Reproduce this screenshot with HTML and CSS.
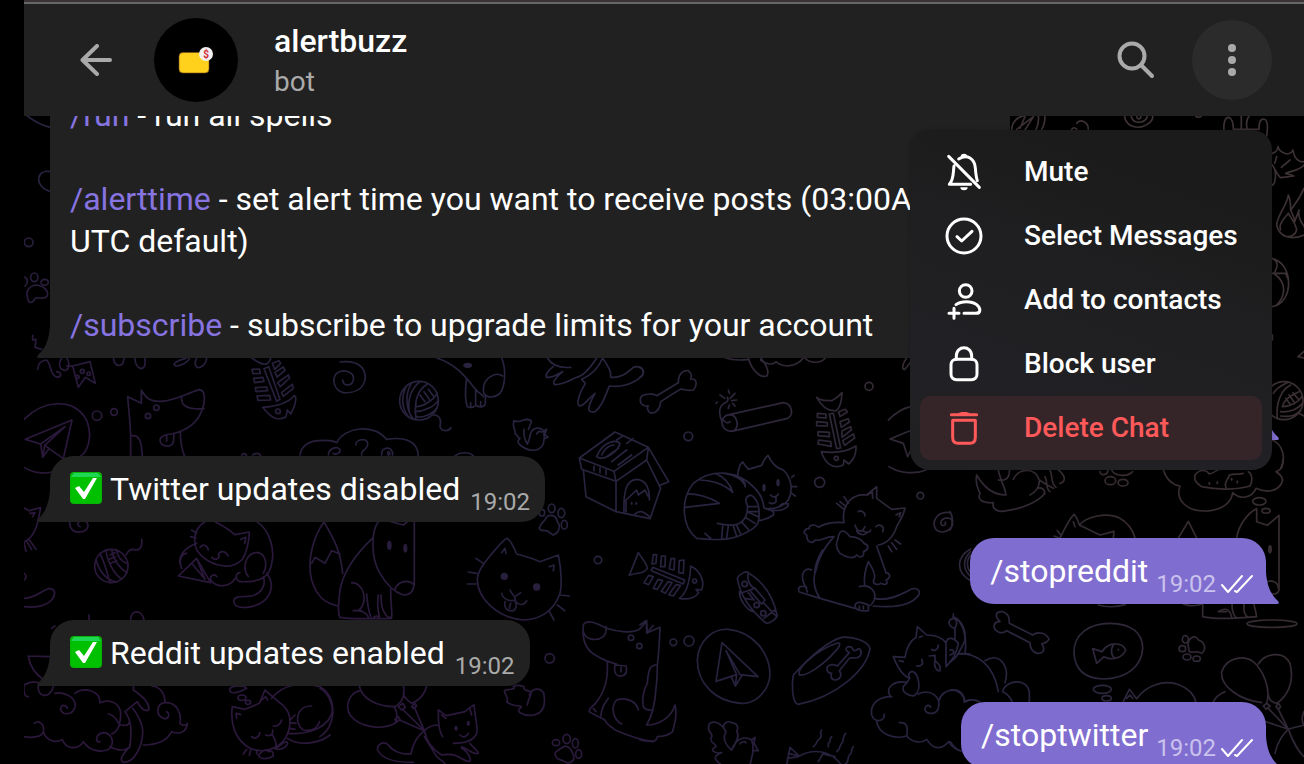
FILE: index.html
```html
<!DOCTYPE html>
<html lang="en">
<head>
    <meta charset="UTF-8">
    <meta name="viewport" content="width=device-width, initial-scale=1.0">
    <title>alertbuzz</title>
    <link rel="stylesheet" href="styles.css">
</head>
<body>
    <div class="app">
        <header class="header">
            <button class="icon-button" type="button" aria-label="Back">
                <svg class="icon-back" viewBox="0 0 32 32"><path d="M30 16H2.5M17 2L2.5 16 17 30"/></svg>
            </button>
            <svg class="avatar" viewBox="0 0 84 84" aria-hidden="true">
                <circle cx="42" cy="42" r="42" fill="#000"/>
                <rect x="25" y="34.5" width="30" height="20.5" rx="4" fill="#ffd01c" stroke="#7a4a20" stroke-width=".6"/>
                <circle cx="52" cy="36" r="7" fill="#f2f0f0"/>
                <text x="52" y="39.5" class="avatar-sign">$</text>
            </svg>
            <div class="peer">
                <h1>alertbuzz</h1>
                <p>bot</p>
            </div>
            <button class="icon-button" type="button" aria-label="Search">
                <svg class="icon-search" viewBox="0 0 40 40"><circle cx="16" cy="16" r="12.5"/><path d="M25 25L36 36"/></svg>
            </button>
            <button class="icon-button active" type="button" aria-label="More actions">
                <svg class="icon-more" viewBox="0 0 40 40"><circle cx="20" cy="8" r="4"/><circle cx="20" cy="20" r="4"/><circle cx="20" cy="32" r="4"/></svg>
            </button>
        </header>

        <main class="chat">
            <!-- Wallpaper -->
            <svg class="wallpaper" viewBox="72 348 3840 1944" preserveAspectRatio="xMinYMin slice" aria-hidden="true">
                <defs>
                    <linearGradient id="tint" x1="0" y1="1" x2="1" y2=".3">
                        <stop offset="0" stop-color="#2c173b"/>
                        <stop offset=".28" stop-color="#2a193c"/>
                        <stop offset=".42" stop-color="#28213d"/>
                        <stop offset=".58" stop-color="#2a2440"/>
                        <stop offset=".76" stop-color="#352b30"/>
                        <stop offset="1" stop-color="#3c3133"/>
                    </linearGradient>
                    <mask id="doodles" maskUnits="userSpaceOnUse" x="72" y="348" width="3840" height="1944">
                        <g class="lines">
                            <!-- left edge -->
                            <g transform="translate(0 330)">
                                <path d="M82 18C105 35 130 48 152 52M150 185C110 175 100 230 150 244"/>
                                <circle cx="86" cy="397" r="13"/>
                                <path d="M82 560C78 545 85 530 105 525 130 525 150 545 140 560 130 570 115 560 105 565 98 580 85 585 82 560M72 500C85 505 85 520 75 528M98 676V690L108 688 105 712 125 718"/>
                                <ellipse cx="103" cy="502" rx="11" ry="13"/>
                                <ellipse cx="134" cy="517" rx="11" ry="9"/>
                            </g>
                            <!-- plane, dog, fish bone -->
                            <g transform="translate(0 1020)">
                                <path d="M72 238C130 180 215 175 252 228 280 270 270 330 240 350M72 382C100 400 135 402 156 396"/>
                                <path d="M216 240L76 298 122 312 128 352 146 328M216 240L190 356 134 316 195 260 122 312M134 316L128 352"/>
                                <circle cx="291" cy="227" r="14"/>
                                <circle cx="342" cy="216" r="10"/>
                                <path d="M392 350V300C392 250 386 210 383 170L424 190V150C438 176 450 184 485 184C525 182 560 160 598 149C620 152 614 190 606 210C592 250 560 272 515 282C485 284 476 295 482 308C490 322 515 322 520 306L522 284M545 168C540 195 560 210 612 206M500 288V304M392 288C420 280 425 310 427 350M541 276C541 310 548 335 554 350"/>
                                <circle cx="444" cy="228" r="8"/>
                                <circle cx="469" cy="203" r="8"/>
                                <path d="M756 88l22-1 3 13-22 1zM761 115l28-3 3 12-28 4zM766 143l34-2 3 11-35 3zM771 168l38-2 3 14-38 1zM792 86l14-6 34 98-10 6zM817 70l20-8 5 8-18 18zM825 97l25-16 5 10-24 20zM833 128l32-23 4 9-28 26zM845 157l32-24 3 12-30 24zM788 202C815 200 860 195 882 167C890 165 890 190 872 222L862 210 858 230C830 246 810 230 788 202zM756 54C770 65 790 75 800 72C808 66 812 60 812 54"/>
                                <circle cx="834" cy="214" r="7"/>
                                <path d="M340 54C345 85 370 82 372 56M404 54C408 90 430 92 435 75V56M560 54C545 60 525 62 522 74 530 85 560 70 568 56M590 54C580 75 590 86 600 82 612 78 620 65 620 54"/>
                                <path d="M218 78L270 65 286 130 256 112 235 142zM113 88C115 70 125 60 140 60 155 75 150 110 175 112 185 108 185 98 170 95M185 54C170 80 185 95 200 90 212 80 205 60 200 54M200 78L218 78"/>
                                <circle cx="247" cy="94" r="6"/>
                                <circle cx="232" cy="111" r="5"/>
                                <circle cx="266" cy="101" r="5"/>
                                <path d="M72 504L88 512 122 503C115 540 110 580 82 600L72 606M90 520L105 518 98 530M88 600L108 628M80 604L95 628M72 608L78 634M210 540C205 570 225 578 240 576 270 574 270 545 250 542 232 542 228 556 240 560M725 345C730 338 738 340 740 347M758 345C765 338 778 338 782 347"/>
                            </g>
                            <!-- spiral, yarn, bird, dog house -->
                            <g transform="translate(960 1020)">
                                <path d="M60 66C110 60 137 80 136 115 130 150 100 160 70 158 40 150 35 115 50 100 70 85 105 95 100 120 95 140 70 140 68 120"/>
                                <circle cx="297" cy="182" r="58"/>
                                <path d="M258 140C240 180 250 210 265 230M275 128C250 170 262 215 280 238M322 132C300 145 280 175 288 238M300 125C275 145 262 175 268 215M288 200C310 200 340 180 352 160M285 215C310 215 345 200 355 180M290 230C310 235 340 220 350 205M300 165L315 185M312 155L328 178M325 148L340 168M340 225C360 225 365 240 360 260 365 275 385 275 393 263"/>
                                <path d="M350 54C400 70 430 100 460 140 480 165 490 165 490 170M545 54C560 90 555 140 540 160 515 180 490 170 490 150 490 110 530 95 548 108M440 115C435 150 435 180 442 200 455 205 465 200 467 195V148M467 195C480 205 495 200 496 190V168M452 188V200M482 185V198"/>
                                <ellipse class="dot" cx="443" cy="76" rx="13" ry="8"/>
                                <path d="M682 54C695 75 720 85 752 82M700 80C685 90 675 105 680 112 700 115 715 100 728 95M728 95C705 115 695 130 705 134 730 135 755 118 770 112 790 108 810 85 830 54M785 118C815 105 835 85 848 54 865 80 875 95 872 112 900 115 920 100 940 82 960 75 975 90 968 105 940 135 900 142 868 138 855 170 845 200 825 215 800 220 800 205 825 160M825 160C805 175 795 195 780 198 765 195 780 155 796 130L785 118"/>
                                <path d="M625 268C635 245 640 240 620 238 600 240 605 250 582 242 575 260 590 275 585 280 600 295 590 290 600 295 595 300 590 305 600 315 630 340 670 335 672 300 675 290 670 280 672 275 665 262 640 258 632 280 628 290 630 300 622 312M612 268C610 285 615 300 622 312M650 282C652 275 660 272 664 276M668 275L680 268 674 282 684 292 672 296"/>
                                <path d="M0 302C20 300 35 300 50 308 75 260 160 250 200 298 250 290 295 300 295 350M25 345C25 325 55 315 60 330 62 340 45 345 40 340M108 315C105 300 140 290 143 310 145 330 120 330 125 345M185 345C180 320 220 315 218 345M205 345C198 335 210 330 210 345M405 348C420 335 450 335 460 348M-60 345C-55 310 -20 300 0 302"/>
                                <path d="M885 276L778 354 882 394 985 322zM778 354L785 388 888 424 882 394M888 424L980 360 985 322M790 390L798 470 888 515V424M888 515L990 536M912 518C910 450 920 420 950 418 980 420 990 450 988 480M918 515V480L950 450 955 465 975 450 985 470M945 522C955 512 970 512 988 530M822 378V392M840 384V398M858 390V404M830 350C850 300 890 300 900 310 895 335 850 365 830 350M845 345C855 325 870 315 882 315M860 350L895 325M875 365L920 330M890 300L905 290M920 310L940 296M895 375L935 345M980 360L1022 445 990 536M985 322L1046 425 1022 435"/>
                                <ellipse class="dot" cx="935" cy="490" rx="3" ry="5"/>
                                <ellipse class="dot" cx="949" cy="490" rx="3" ry="5"/>
                                <path d="M660 560C665 545 675 545 680 530 695 520 710 530 712 545 725 560 715 580 700 585 690 580 685 570 675 572 660 572 655 568 660 560"/>
                                <ellipse cx="695" cy="505" rx="10" ry="13"/>
                                <ellipse cx="724" cy="519" rx="10" ry="14"/>
                                <ellipse cx="733" cy="554" rx="9" ry="13"/>
                                <ellipse cx="666" cy="518" rx="8" ry="10"/>
                            </g>
                            <!-- bone, dynamite, fish bone, cats -->
                            <g transform="translate(1920 1020)">
                                <path d="M50 167L115 128C115 100 130 90 145 92 155 100 155 110 152 117 175 115 170 140 160 150 140 155 130 145 120 148L62 185C60 210 45 222 30 218 20 210 22 200 25 198 0 200 -3 180 5 168 20 160 40 160 50 167M0 82C15 90 12 105 0 112M258 54C280 62 310 60 325 58M325 54C335 90 360 115 380 108 390 95 375 70 362 54M362 60C380 75 400 75 408 65 430 85 470 80 490 54M495 54C510 70 540 72 556 54"/>
                                <circle cx="145" cy="289" r="13"/>
                                <circle cx="687" cy="139" r="12"/>
                                <circle cx="539" cy="427" r="15"/>
                                <circle cx="841" cy="467" r="10"/>
                                <path d="M268 224L430 188C455 190 465 225 440 236L275 274M270 224C290 225 298 255 285 270 265 280 245 265 246 245 250 230 260 224 270 224M246 245C235 220 235 195 260 186 265 182 265 178 262 172M250 240C255 250 265 250 270 245M265 150L268 160M285 160L270 175M290 180L275 182M240 165L255 175M228 190L232 186M265 205L268 195M285 198L278 190"/>
                                <path d="M530 172C545 185 560 180 575 182 590 175 600 165 606 158 605 180 600 205 588 212 560 215 540 190 530 172zM532 220L558 222V234L532 232zM530 245L562 248V258L530 257zM534 275L568 277V290L534 287zM536 300L572 305 574 319 534 312zM568 222L580 220 602 324 590 326zM596 215L616 208 622 216 600 230zM600 245L624 236 628 246 604 262zM606 272L632 260 634 270 606 292zM608 302L640 282 644 294 614 316zM544 335C580 340 620 335 648 318 650 345 640 360 626 372L612 360 610 375C580 390 555 370 544 335"/>
                                <circle cx="589" cy="355" r="6"/>
                                <path d="M745 240C770 215 790 205 812 200M810 272L750 297 790 310 803 350 810 335M747 380C780 402 830 402 858 390M800 54C785 75 785 90 795 88L812 66"/>
                                <path d="M293 405C295 385 300 372 308 366 315 375 320 382 325 388L365 376C372 360 378 350 384 346 395 370 410 385 430 390 455 415 460 450 445 480 430 500 400 510 372 504M372 504C370 480 360 460 345 445 300 395 220 380 160 430 120 480 125 560 170 595 215 600 260 600 290 590 330 575 355 560 356 540 360 510 355 480 335 466 315 465 315 485 322 495 325 530 310 570 232 550M180 420C210 420 250 430 278 457 270 430 250 410 225 400M255 400C285 405 310 420 316 440 315 420 300 410 285 405M142 462C175 460 215 475 238 490L135 502M195 580L212 595M245 595L248 558M260 593L265 558M302 582L290 556M290 588L280 558M325 568L304 545M345 550L316 532M355 530L325 517M355 515H326M350 500L325 500M372 504C390 512 405 510 400 525 380 540 365 540 355 542M400 510C420 515 445 505 445 492 435 488 425 492 420 496M392 465C400 475 412 470 415 462M408 468V485C400 495 390 490 388 488M455 412L462 406M458 440H470M455 460L466 468"/>
                                <ellipse class="dot" cx="372" cy="443" rx="5" ry="11"/>
                                <ellipse class="dot" cx="414" cy="428" rx="5" ry="11"/>
                                <path d="M612 548C575 545 555 550 535 562 525 550 505 555 508 565 495 565 485 580 500 585 500 605 515 615 525 600 545 605 550 590 582 590 560 615 540 640 528 690M612 548C605 510 620 480 650 468 662 462 670 465 680 465L710 440V475L755 508 795 504C790 530 780 540 770 560 760 590 740 610 715 615M682 465L697 455 698 475M768 525L782 518 778 530M600 640C580 615 595 600 595 590 600 570 610 565 630 590 650 590 665 600 672 610 690 615 685 630 670 635 675 650 660 655 650 645 640 660 615 650 600 640M645 555C650 570 655 575 668 572 680 580 690 578 692 570M668 572L675 560M650 572C655 585 675 588 680 578M655 515C660 510 675 515 675 528M708 560C720 550 735 560 728 575M590 490L612 508M600 485L618 500M612 470L625 490M745 618L755 635M755 608L770 628M765 600L782 612M710 618L738 698"/>
                                <path d="M932 518C885 512 870 555 892 572 920 585 945 560 935 538 915 525 895 545 905 555 915 560 920 550 915 547"/>
                            </g>
                            <!-- yarn, sleeping cats, clouds -->
                            <g transform="translate(0 1650)">
                                <circle cx="334" cy="48" r="50"/>
                                <path d="M300 10C310 30 320 60 330 98M288 30C300 70 320 90 350 96M318 0C320 30 340 70 365 88M335 0C340 30 360 55 380 68M350 0C352 20 365 35 384 42M330 15L345 8M328 28L345 20M332 40L350 32M378 15C385 0 395 -5 405 0 420 0 428 -10 425 -32"/>
                                <path d="M72 145C105 145 120 125 145 116 165 115 170 130 155 150 135 170 100 174 72 170M72 70C80 75 80 85 72 90M392 210C390 180 425 175 432 210M267 195V210M155 235L165 228M85 318L150 320M85 318C90 350 110 375 130 388"/>
                                <path d="M615 -85C590 -70 575 -40 590 0 620 45 690 65 725 30 740 10 748 -30 748 -54L704 -46C690 -60 665 -75 645 -85M722 -32L738 -38 734 -20M540 40C535 20 550 -5 590 -20M770 -85C810 -60 825 0 815 40 810 75 790 98 720 95 705 90 705 70 720 68M545 55C535 30 545 10 560 10M535 78L590 25 632 98zM575 40L615 88 590 25M745 80C725 60 735 5 775 8 800 15 802 50 790 70M800 70C830 110 810 165 740 172 710 175 700 165 702 150 705 135 740 142 755 138 780 132 800 110 790 80M632 90C650 115 690 112 705 85M632 90C628 75 645 70 650 80M575 -60L590 -50M572 -40L588 -36M600 -8C610 -20 622 -14 625 0M655 15C660 -2 680 5 684 18M636 22C645 32 655 28 658 18"/>
                                <path d="M72 405C90 395 105 392 118 400M72 405C70 430 75 440 85 440M115 408C110 440 150 450 160 410M165 430C190 425 230 440 225 470 218 500 180 495 182 475 185 462 200 465 202 475M225 430C250 410 300 420 300 458 330 445 360 460 362 490 362 520 355 545 335 552M325 492C350 495 350 520 362 525 385 530 390 520 388 510M72 560C100 565 125 560 130 545 135 520 115 510 103 520M130 545C140 575 170 580 186 568 200 600 235 600 250 575 270 605 310 610 330 595 345 575 335 550 310 548 285 552 285 580 300 575M330 590C350 600 375 605 390 590M375 485L412 455C420 475 435 485 446 480 450 460 430 440 400 420V408M375 485C395 510 395 545 390 590C370 610 355 630 370 637 400 640 430 590 428 540 424 510 410 490 398 475M455 408C480 410 495 430 495 458M495 458C470 460 465 495 490 505 508 510 510 490 500 485M495 458C530 455 545 490 540 520 550 530 560 525 562 520 560 545 540 555 515 545 500 575 470 585 430 585"/>
                                <path d="M697 470C690 520 705 570 750 595 800 615 850 590 865 545 880 500 860 470 835 455L795 420 778 460 735 478zM815 445C850 400 910 395 960 410 985 425 998 450 998 480M785 450L797 440 803 450M710 505L708 490 722 494M755 560C765 570 778 560 780 548M820 528C835 530 842 520 845 510M797 555C810 560 820 555 818 540M818 555C825 570 830 575 828 588M870 510L885 495M872 518L888 520M870 535L885 538M865 550C930 555 990 530 998 480M862 565C900 590 960 580 990 555M935 468C890 465 880 520 910 540 940 545 955 530 958 515M775 615C790 600 800 595 805 605 815 600 820 605 820 618 800 630 780 628 775 615M825 595C840 590 860 565 863 580 855 600 830 600 825 595M740 598L730 612M752 600L748 616M770 600V612M690 415C685 430 705 435 740 415 735 405 700 405 690 415"/>
                                <ellipse cx="726" cy="443" rx="12" ry="8"/>
                                <ellipse cx="744" cy="457" rx="8" ry="6"/>
                            </g>
                            <!-- dogs, cat face, balloons -->
                            <g transform="translate(960 1650)">
                                <path d="M12 -85C-20 -40 -40 30 -25 90C-10 140 15 160 55 168M12 -85C35 -40 60 -10 68 70M-25 40L-15 22 15 40 35 2 60 12M160 -38C120 0 70 60 60 120 55 160 55 195 60 202 90 208 120 206 215 205M175 -85C155 -60 150 20 180 70 200 105 220 125 250 135 275 135 283 120 283 90V-85M225 120C230 95 265 85 282 105M95 98C135 100 145 160 115 182 135 185 145 195 145 203M100 182H125M140 132C142 160 145 180 152 200M175 135C172 155 172 175 178 200M183 135C183 160 185 180 195 190 200 200 205 205 215 200 218 190 212 180 212 118M212 -85L250 -75 262 -85M158 205C165 195 175 198 178 203"/>
                                <ellipse class="dot" cx="208" cy="-14" rx="7" ry="14"/>
                                <ellipse class="dot" cx="256" cy="-5" rx="6" ry="13"/>
                                <path d="M500 30C540 -20 555 -35 562 -35 575 -25 585 0 590 12 620 20 645 28 660 35L715 15C725 60 725 110 720 130 700 190 650 210 610 210 540 205 470 150 472 85 475 60 490 45 500 30zM545 8L555 -5 558 10M688 50L702 45 700 62M468 25L490 40M445 66L470 70M442 102H468M720 135L748 138M712 165L734 182M688 185L702 210M570 120C575 135 590 140 585 150 570 155 550 150 545 130M585 150C595 170 615 165 620 152M602 128L585 140M555 155C550 175 565 185 580 182 592 175 590 165 585 152M572 160L568 175"/>
                                <circle class="dot" cx="553" cy="79" r="11"/>
                                <circle class="dot" cx="650" cy="111" r="11"/>
                                <path d="M0 415C30 430 45 480 35 510 30 530 15 550 0 560M118 408C125 445 170 470 225 470 250 455 255 430 250 408M120 422C85 430 75 470 90 495 120 535 190 540 225 520 235 500 230 480 222 470M320 408C315 430 300 450 275 460 260 450 252 440 250 430M235 470L248 460 256 472 245 480zM275 470L285 460 290 468 280 475zM225 508L235 500 240 508 230 516zM250 480L313 542M283 472L313 542M238 510L313 542"/>
                                <path d="M355 480C365 485 370 495 380 497L435 485C445 475 455 470 462 465 465 500 475 540 470 550 460 575 430 580 400 580M355 480C355 510 355 540 368 560M313 542C330 525 345 525 355 525M313 542C290 560 278 580 273 612 240 615 215 600 205 585 190 570 170 585 173 600 185 625 220 638 280 637M313 542C320 580 340 600 365 615 380 612 400 612 415 620 440 635 455 640 450 625 445 610 435 600 425 595M313 560L350 620 375 640M425 590C440 595 460 615 475 610 470 595 455 590 450 580M420 555C430 565 440 560 445 550M365 495L378 505M450 478L455 495"/>
                                <ellipse class="dot" cx="408" cy="535" rx="5" ry="8"/>
                                <ellipse class="dot" cx="445" cy="520" rx="5" ry="8"/>
                                <ellipse cx="708" cy="578" rx="11" ry="9"/>
                                <ellipse cx="740" cy="567" rx="11" ry="14"/>
                                <ellipse cx="766" cy="580" rx="9" ry="14"/>
                                <ellipse cx="776" cy="612" rx="9" ry="13"/>
                                <path d="M705 610C710 600 725 595 735 588 750 590 755 600 762 620 762 635 750 640 740 638 725 628 705 630 705 610"/>
                                <circle cx="834" cy="30" r="11"/>
                                <circle cx="689" cy="325" r="14"/>
                                <path d="M622 465C625 440 640 430 630 425 620 418 610 425 612 410 600 405 585 405 580 410 590 420 570 415 553 422 555 435 568 445 560 455 575 470 595 465 605 470 600 475 590 480 600 488 630 505 670 495 673 460 675 440 670 435 672 430 660 410 635 415 628 435 622 450M636 438C638 430 645 425 648 430M655 420L662 408 668 425 680 432 670 436"/>
                                <path d="M860 235C890 245 930 250 955 240 970 230 975 215 980 212V250L1000 226M860 235C830 220 800 205 790 225 785 270 800 300 825 315 850 330 870 338 890 342M790 245C795 270 830 275 850 260 858 250 860 240 858 230M885 345C880 370 890 380 905 378 920 375 922 360 918 348L885 345M903 352V365M862 338C865 390 850 430 830 455 820 470 805 475 808 485 820 495 840 500 855 510M865 445C850 465 845 475 842 500M820 475L828 485M855 510C860 525 875 530 885 540 920 555 960 570 1000 575M905 522C880 510 870 470 890 450 920 440 950 455 955 480"/>
                                <circle cx="933" cy="263" r="8"/>
                                <circle cx="958" cy="288" r="8"/>
                            </g>
                            <!-- fish bone, collar, plane, bowl -->
                            <g transform="translate(1920 1650)">
                                <path d="M18 212L22 248 60 232C58 290 55 320 52 345 52 380 50 400 48 415 45 460 35 500 20 525 60 525 95 500 105 465 115 500 100 530 98 545 80 560 60 560 52 560 50 575 40 578 0 570M48 345C30 345 25 360 22 400 10 420 5 450 10 470 15 482 30 480 38 480M0 225L18 212"/>
                                <path d="M-5 8L-32 76C-10 65 10 75 22 55 22 40 5 25 -5 8M40 14h10l-2 26-12 2zM64 18h12l-1 32h-13zM93 26h11l-2 34-14-3zM118 32l14-2-2 40-14-2zM38 52L134 90 130 102 34 62zM12 98L26 76 40 80 26 104zM40 115L54 88 68 92 52 118zM64 124L84 95 96 98 76 130zM86 134L108 104 122 106 100 138zM152 48C185 65 195 100 184 120L168 118 176 128C165 145 145 150 118 145C140 130 150 90 152 48z"/>
                                <circle cx="164" cy="93" r="6"/>
                                <path d="M292 85C300 70 318 62 325 68 370 95 400 140 412 198 405 210 390 220 380 220 340 190 300 140 292 85zM298 125C300 160 330 185 340 185L330 170M302 130L345 115 375 150 365 162 332 125M372 160L410 200M325 68C320 90 330 110 345 115M315 145L342 150 325 128M372 205L405 180"/>
                                <circle cx="314" cy="102" r="8"/>
                                <circle cx="350" cy="165" r="8"/>
                                <circle cx="370" cy="190" r="8"/>
                                <circle cx="100" cy="277" r="10"/>
                                <circle cx="147" cy="273" r="15"/>
                                <path d="M172 330C175 270 220 235 265 238 340 245 390 310 390 375 385 430 340 462 305 460 220 455 172 395 172 330zM246 278L228 394 290 374M246 278L354 380 300 374 258 302 290 374 286 408 274 380M306 376L286 408"/>
                                <path d="M528 60C515 90 525 125 540 145L478 126C470 110 485 105 500 112M548 0C535 20 525 45 524 72M515 60C495 50 482 70 490 95 495 110 500 115 502 126M540 145L645 175M645 165C650 155 665 155 685 165V182C665 185 645 182 645 165M658 168V178M670 168V178M658 110C690 100 710 125 703 150 698 160 690 168 685 168M685 35C675 60 672 90 674 108M685 35C698 55 710 80 700 92 700 105 715 105 722 100 740 108 745 100 738 90 755 82 750 70 738 68M703 145C740 155 780 135 805 122 825 108 845 120 836 135 815 165 770 175 700 168"/>
                                <path d="M460 375C510 320 560 275 605 262 640 258 685 275 690 295 680 360 590 440 475 463 455 460 455 400 460 375zM478 375C470 355 530 300 590 280 605 275 600 290 585 305 555 340 500 380 478 375zM592 348L628 308C610 300 620 285 635 292 640 300 640 305 650 300 660 290 668 305 660 318 650 330 635 320 628 325L598 362C608 375 600 390 585 390 570 388 572 375 575 370 560 370 555 350 570 345 580 342 585 345 592 348"/>
                                <path d="M275 600C250 580 250 560 258 545 240 525 260 510 275 518 295 520 295 535 290 545 300 555 290 575 275 600M258 545C240 510 205 510 206 530 200 545 220 550 215 560 205 580 230 580 228 590 205 600 225 612 245 608 225 615 215 625 245 645M275 600C285 570 310 555 335 570 345 600 335 620 330 645M335 570L345 562 342 580 355 602 338 602M300 582C303 575 315 572 318 578"/>
                                <path d="M545 540C535 550 550 555 540 565 525 575 535 580 520 590M575 560C565 570 575 575 565 580V590M617 550C605 560 615 570 605 580 595 590 605 595 590 605M640 590C630 600 640 608 628 615 620 625 630 635 615 642M440 645L450 592 478 618C520 595 570 600 605 645M478 618L445 610M442 625L475 620M535 635L548 612 585 620"/>
                                <path d="M760 320L795 322C800 290 815 270 828 262L832 230 860 255C890 255 905 262 918 278M760 320C775 360 795 380 810 385M838 262L848 258M778 332L790 335M918 280V350C940 330 950 310 955 280 940 260 920 260 918 280M930 300C945 298 945 310 930 315M945 265V235C925 230 920 210 940 205 955 210 950 225 945 235M940 205V192M950 205C975 230 980 270 975 312M955 312H990M895 285C895 300 880 305 875 298M868 318L885 316V330C880 350 890 365 900 362 905 350 895 340 885 332M830 348C845 350 852 340 845 328M808 385C800 365 820 355 832 380 842 410 835 430 820 438 800 435 785 425 790 410 800 400 805 395 808 385M750 438C735 410 765 390 800 397M755 440C710 440 690 465 695 495 705 520 735 515 733 492M710 515C715 550 760 570 800 558 805 530 800 515 778 518M800 558C820 580 845 580 860 568 880 600 905 600 925 575 940 595 950 600 965 603M835 432C870 415 905 440 895 475 885 500 850 490 855 475 860 462 870 465 872 472M897 452C905 415 965 405 975 455L990 450"/>
                            </g>
                            <!-- right side -->
                            <g transform="translate(2850 1380)">
                                <path d="M80 45C75 70 85 90 90 100 80 120 100 130 130 128 125 145 140 160 170 152 220 145 265 125 285 100M80 45C100 80 130 105 168 105 165 80 150 60 145 30M145 60C170 65 180 50 178 30M190 58C205 25 255 20 268 60 270 80 255 98 240 105M262 85C280 80 290 95 278 108M285 50C295 70 285 85 300 95M300 30C310 50 300 70 318 82M325 30C345 45 350 65 330 70M268 60C290 75 300 80 310 85M450 35C450 45 470 50 475 30M485 30C490 45 530 55 548 35"/>
                                <ellipse cx="481" cy="62" rx="16" ry="12"/>
                                <ellipse cx="519" cy="68" rx="15" ry="10"/>
                                <path d="M640 30C650 60 670 75 690 78 675 120 710 155 770 153 820 150 845 125 848 98 870 120 905 115 918 85 950 100 990 95 998 60 995 45 985 40 978 35M998 0V10C998 25 990 30 978 35M735 45C730 65 745 72 755 80 800 90 860 90 900 78 910 60 905 40 895 35M735 45C750 25 770 30 778 42 790 40 800 30 805 30M828 82C820 65 835 60 838 45 850 40 870 45 880 40"/>
                                <ellipse class="dot" cx="778" cy="70" rx="3" ry="5"/>
                                <ellipse class="dot" cx="802" cy="68" rx="3" ry="5"/>
                                <ellipse class="dot" cx="845" cy="58" rx="3" ry="5"/>
                                <ellipse class="dot" cx="862" cy="66" rx="3" ry="5"/>
                                <ellipse cx="928" cy="124" rx="20" ry="11"/>
                                <ellipse cx="948" cy="152" rx="12" ry="7"/>
                                <path d="M330 234C345 205 355 180 372 163 380 170 385 185 388 195L450 225 492 214C492 222 490 228 490 234M388 195C410 170 470 155 510 175 535 190 550 215 555 234M312 228L330 235M322 212L332 225M370 185L375 200M62 267C20 290 15 335 62 362M62 275C35 300 40 330 62 350M62 285C48 300 50 325 62 338M0 155C10 170 10 195 0 210"/>
                                <path d="M685 234L715 184 740 234M860 234C865 200 890 160 920 146V185L952 196 987 166V390C985 400 975 405 960 400M945 370C960 355 985 365 985 385M700 432C720 440 740 438 757 432M758 434V470C790 478 830 478 920 470M846 432C846 455 850 465 858 472M882 434C880 455 885 468 895 472M912 434C915 450 922 465 918 470M805 455C830 440 840 450 845 472M805 455H830M445 435C465 442 500 442 525 434"/>
                                <ellipse class="dot" cx="960" cy="268" rx="6" ry="13"/>
                                <ellipse cx="966" cy="491" rx="75" ry="11"/>
                                <path d="M178 490L248 525C265 512 290 520 297 538 290 550 280 550 275 552 290 570 275 582 262 580 245 575 240 560 240 548L170 512C155 525 135 515 132 500 132 485 145 485 150 485 130 465 140 453 158 455 178 462 178 475 178 490z"/>
                                <path d="M372 580C370 520 420 490 480 490 545 490 578 520 578 565 575 620 530 655 460 657 400 655 375 625 372 580zM428 566L440 610 462 590C490 605 520 590 527 570 520 550 480 540 456 575L428 566M490 555C480 570 485 590 495 595"/>
                                <circle class="dot" cx="505" cy="569" r="3"/>
                                <ellipse cx="457" cy="688" rx="27" ry="12"/>
                                <ellipse cx="470" cy="715" rx="14" ry="8"/>
                                <path d="M715 560C710 535 735 520 745 540 765 545 770 570 755 580 740 570 730 580 718 575z"/>
                                <ellipse cx="706" cy="538" rx="9" ry="11"/>
                                <ellipse cx="697" cy="566" rx="10" ry="9"/>
                                <ellipse cx="711" cy="591" rx="12" ry="9"/>
                                <ellipse cx="740" cy="596" rx="11" ry="8"/>
                                <path d="M520 724L538 688 560 716C590 675 640 660 680 672 720 685 735 710 737 726M530 715L540 705 548 715"/>
                                <path d="M935 728C870 720 810 680 815 635 830 590 890 580 920 615 950 650 960 700 950 728M925 612C945 580 1000 570 1020 610 1035 670 1010 710 980 730 970 728 955 720 955 705M790 725C800 705 815 700 825 695M940 738L950 730 960 738 948 748zM978 740L985 730 992 740 985 748zM955 745L1015 808M985 748L1015 808M948 785L1015 808M1015 808C1000 820 980 850 975 880M1015 808C1030 850 1050 880 1062 890M1015 808C1035 800 1050 798 1062 796M1062 755C1055 770 1055 785 1062 796"/>
                                <path d="M0 605C10 600 20 590 25 580 80 580 130 610 145 695M25 580C35 560 50 540 45 530 45 500 30 480 10 470M105 602C150 575 180 620 165 668M158 695C165 660 235 650 238 700V726M158 695C170 700 180 710 187 726M0 690C30 685 45 705 42 726 60 715 80 720 90 726M0 845C10 855 15 870 33 873"/>
                            </g>
                            <g transform="translate(3312 330)">
                                <path d="M62 20C65 45 90 56 115 50 140 40 148 30 146 18M82 20C90 45 125 40 130 18M98 20C100 30 112 28 110 18M275 18C280 24 290 22 292 18M360 62C358 40 362 22 375 22 388 28 388 45 388 58H465C465 45 465 28 478 27 492 28 492 50 488 78M412 58V18M430 58C425 40 430 25 435 18"/>
                                <path d="M505 130C520 125 520 118 522 110 525 125 540 130 550 132 560 130 565 125 567 120 570 145 585 158 600 155M505 165C515 180 520 195 530 203L570 198 545 190C570 180 590 180 600 165M518 140L512 160M558 150L532 172M505 165C520 185 515 220 505 226"/>
                                <path d="M553 255C550 285 520 315 518 345 525 380 560 392 600 375M553 255C560 270 560 290 560 300M600 235C585 270 575 280 560 300 565 315 570 315 572 335L585 300C580 330 600 345 600 350M530 360C520 340 550 315 553 310 565 330 575 340 578 360 575 375 560 380 550 380"/>
                                <path d="M505 446C570 460 570 580 505 590M505 490H545M510 490C525 465 520 455 510 448M512 492C550 520 545 560 515 588M545 490L553 510M505 675V690M600 724L582 740 600 744M505 990C540 1005 545 1050 530 1075M585 910L600 918"/>
                                <circle cx="540" cy="872" r="57"/>
                                <path d="M520 926C515 880 530 840 560 825M508 850C520 830 535 825 550 818M535 890C560 890 585 875 594 860M530 905C560 908 585 895 595 880M530 918C560 922 580 915 590 900M535 890C540 870 560 855 585 845M545 865L560 885M555 855L572 878M567 848L583 868"/>
                            </g>
                            <path d="M3035 390C3035 365 3055 350 3070 348M3050 388L3100 350M3060 385L3075 350M3075 390L3100 350M3115 348C3118 365 3112 380 3108 390M3135 348C3135 365 3130 380 3125 388M3215 388C3220 380 3230 385 3230 388M3230 370C3240 355 3265 365 3265 388"/>
                        </g>
                    </mask>
                </defs>
                <rect x="72" y="348" width="3840" height="1944" fill="url(#tint)" mask="url(#doodles)"/>
            </svg>

            <div class="messages">
                <div class="message in">
                    <p><a href="#run">/run</a> - run all spells<br><br><a href="#alerttime">/alerttime</a> - set alert time you want to receive posts (03:00AM UTC default)<br><br><a href="#subscribe">/subscribe</a> - subscribe to upgrade limits for your account</p>
                </div>
                <div class="message out covered"></div>
                <div class="message in">
                    <svg class="check" viewBox="0 0 32 32" role="img" aria-label="Check mark"><rect width="32" height="32" rx="4" fill="#06b406"/><rect x="1" y="5" width="30" height="26" rx="3" fill="#00c000"/><path d="M4 1H28L31 5H1z" fill="#1fd655"/><path d="M5 16L9 14 14 20 23 6H27L15 27H13z" fill="#fff"/></svg>
                    <p>Twitter updates disabled</p>
                    <time>19:02</time>
                </div>
                <div class="message out">
                    <p>/stopreddit</p>
                    <time>19:02</time>
                    <svg class="ticks" viewBox="0 0 34 20"><path d="M2 11L8 18 22 2M15 17L17 18 32 2"/></svg>
                </div>
                <div class="message in">
                    <svg class="check" viewBox="0 0 32 32" role="img" aria-label="Check mark"><rect width="32" height="32" rx="4" fill="#06b406"/><rect x="1" y="5" width="30" height="26" rx="3" fill="#00c000"/><path d="M4 1H28L31 5H1z" fill="#1fd655"/><path d="M5 16L9 14 14 20 23 6H27L15 27H13z" fill="#fff"/></svg>
                    <p>Reddit updates enabled</p>
                    <time>19:02</time>
                </div>
                <div class="message out">
                    <p>/stoptwitter</p>
                    <time>19:02</time>
                    <svg class="ticks" viewBox="0 0 34 20"><path d="M2 11L8 18 22 2M15 17L17 18 32 2"/></svg>
                </div>
            </div>
        </main>

        <div class="menu">
            <button type="button">
                <svg viewBox="0 0 120 120"><path d="M14 13L106 106M44 21C70 5 92 20 94 48C95 62 96 74 100 86M30 42C27 62 30 82 16 97H80"/><path class="solid" d="M50 14a10 9 0 0 1 20 0zM49 106h22a11 9 0 0 1-22 0z"/></svg>
                <span>Mute</span>
            </button>
            <button type="button">
                <svg viewBox="0 0 120 120"><circle cx="60" cy="60" r="51"/><path d="M39 62L53 75 84 46"/></svg>
                <span>Select Messages</span>
            </button>
            <button type="button">
                <svg viewBox="0 0 120 120"><circle cx="65" cy="33" r="19"/><path d="M36 74C52 62 82 62 98 74 112 86 110 100 96 100H60M15 100H45M30 85V115"/></svg>
                <span>Add to contacts</span>
            </button>
            <button type="button">
                <svg viewBox="0 0 120 120"><rect x="21" y="46" width="78" height="61" rx="16"/><path d="M37 46V36C37 3 83 3 83 36V46"/></svg>
                <span>Block user</span>
            </button>
            <button type="button" class="danger">
                <svg viewBox="0 0 120 120"><path d="M22 20H98M26 37H94V88C94 100 88 106 78 106H42C32 106 26 100 26 88z"/><path class="solid" d="M42 18C44 10 76 10 78 18z"/></svg>
                <span>Delete Chat</span>
            </button>
        </div>
    </div>
</body>
</html>
```
FILE: styles.css
```css
* {
    box-sizing: border-box;
}
body {
    margin: 0;
    background-color: #000;
    color: #fff;
    font-family: Roboto, "Liberation Sans", sans-serif;
    overflow: hidden;
}
h1, p {
    margin: 0;
}
button {
    border: none;
    background: none;
    color: inherit;
    font-family: inherit;
    cursor: pointer;
}
.app {
    position: relative;
    display: flex;
    flex-direction: column;
    height: 100vh;
    margin-left: 24px;
    overflow: hidden;
}

/* Header */
.header {
    position: relative;
    z-index: 1;
    display: flex;
    align-items: center;
    flex-shrink: 0;
    height: 116px;
    padding: 2px 32px 0;
    border-top: 2px solid #3b3236;
    box-shadow: inset 0 2px #676767;
    background-color: #212121;
}
.icon-button {
    display: flex;
    align-items: center;
    justify-content: center;
    width: 80px;
    height: 80px;
    padding: 0;
    border-radius: 50%;
}
.icon-button.active {
    margin-left: 16px;
    background-color: #2b2b2b;
}
.icon-button svg {
    width: 40px;
    height: 40px;
    fill: none;
    stroke: #aaa;
    stroke-width: 4;
    stroke-linecap: round;
    stroke-linejoin: round;
}
.icon-button .icon-back {
    width: 32px;
    height: 32px;
}
.icon-button .icon-more {
    fill: #aaa;
    stroke: none;
}
.avatar {
    width: 84px;
    height: 84px;
    margin: 0 36px 0 18px;
}
.avatar-sign {
    font-size: 10px;
    font-weight: 700;
    fill: #d02a35;
    text-anchor: middle;
}
.peer {
    flex: 1;
    padding-top: 4px;
}
.peer h1 {
    font-size: 32px;
    font-weight: 500;
    line-height: 40px;
}
.peer p {
    color: #aaa;
    font-size: 28px;
    line-height: 42px;
}

/* Chat */
.chat {
    position: relative;
    flex: 1;
    min-height: 0;
}
.wallpaper {
    position: absolute;
    inset: 0;
    width: 100%;
    height: 100%;
}
.lines {
    fill: none;
    stroke: #fff;
    stroke-width: 5;
    stroke-linecap: round;
    stroke-linejoin: round;
}
.lines .dot {
    fill: #fff;
    stroke: none;
}
.messages {
    position: relative;
    display: flex;
    flex-direction: column;
    gap: 16px;
    margin-top: -34px;
    padding: 0 38px 0 26px;
}
.message {
    position: relative;
    display: flex;
    max-width: 960px;
    padding: 12px 15px 12px 20px;
    border-radius: 24px;
    font-size: 32px;
    line-height: 42px;
}
.message.in {
    align-self: flex-start;
    border-bottom-left-radius: 0;
    background-color: #212121;
}
.message.out {
    align-self: flex-end;
    padding-right: 12px;
    border-bottom-right-radius: 0;
    background-color: #7f6dd0;
}
.message.covered {
    width: 296px;
    height: 66px;
}
.message::after {
    content: "";
    position: absolute;
    bottom: 0;
    left: -13px;
    width: 14px;
    height: 32px;
    background-color: #212121;
    clip-path: path("M14 0H13C12 14 8 23 1 29Q-1 32 2 32H14z");
}
.message.out::after {
    left: auto;
    right: -13px;
    background-color: #7f6dd0;
    transform: scaleX(-1);
}
.message a {
    color: #8774e1;
    text-decoration: none;
}
.message time {
    align-self: flex-end;
    margin: 0 0 -6px 10px;
    color: #aaa;
    font-size: 24px;
    line-height: 28px;
}
.message.out time {
    margin-left: 8px;
    color: #cac2ec;
}
.check {
    width: 32px;
    height: 32px;
    margin: 4px 8px 0 0;
}
.ticks {
    align-self: flex-end;
    width: 34px;
    height: 20px;
    margin: 0 0 -2px 4px;
    fill: none;
    stroke: #fff;
    stroke-width: 2;
    stroke-linecap: round;
    stroke-linejoin: round;
}

/* Menu */
.menu {
    position: absolute;
    z-index: 2;
    top: 130px;
    right: 32px;
    width: 362px;
    padding: 10px;
    border-radius: 20px;
    background: linear-gradient(200deg, #1b1b1b 20%, #1f1f21 45%, #212125 75%, #202022);
    box-shadow: 0 0 4px rgba(0, 0, 0, 0.2);
}
.menu button {
    display: flex;
    align-items: center;
    gap: 40px;
    width: 100%;
    height: 64px;
    padding: 0 24px;
    border-radius: 10px;
    font-size: 28px;
    font-weight: 500;
    white-space: nowrap;
}
.menu span {
    padding-bottom: 2px;
}
.menu svg {
    flex-shrink: 0;
    width: 40px;
    height: 40px;
    fill: none;
    stroke: currentColor;
    stroke-width: 9;
    stroke-linecap: round;
    stroke-linejoin: round;
}
.menu .solid {
    fill: currentColor;
    stroke: none;
}
.menu .danger {
    background-color: #352529;
    color: #ff595a;
}
```
